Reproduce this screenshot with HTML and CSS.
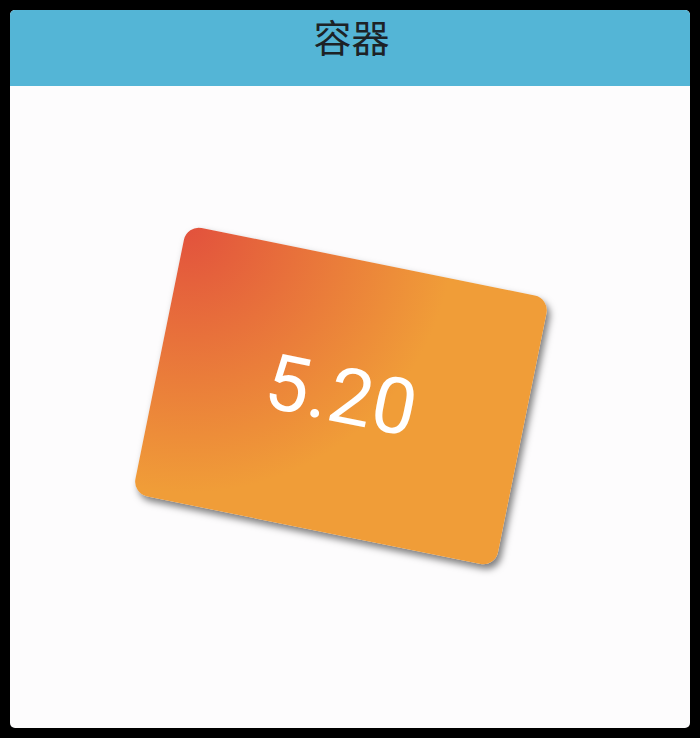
FILE: index.html
```html
<!DOCTYPE html>
<html lang="zh">
<head>
<meta charset="utf-8">
<title>容器</title>
<link rel="stylesheet" href="styles.css">
</head>
<body>
<div class="panel">
  <header class="appbar">
    <h1 class="title">容器</h1>
  </header>
  <main class="content">
    <div class="card">
      <span class="value">5.20</span>
    </div>
  </main>
</div>
</body>
</html>
```
FILE: styles.css
```css
html, body {
  margin: 0;
  padding: 0;
  background: #000;
}
body {
  padding: 10px;
  font-family: Roboto, "Noto Sans CJK SC", sans-serif;
}
.panel {
  width: 680px;
  height: 718px;
  border-radius: 5px;
  background: #fdfcfd;
  display: flex;
  flex-direction: column;
}
.appbar {
  height: 76px;
  flex: none;
  background: #54b5d6;
  border-radius: 5px 5px 0 0;
  display: flex;
  justify-content: center;
  align-items: center;
  padding-bottom: 24px;
  box-sizing: border-box;
}
.title {
  margin: 0;
  font-family: "Noto Sans CJK SC", sans-serif;
  font-weight: 400;
  font-size: 38px;
  line-height: 1.2;
  color: #1d2226;
  padding-left: 3px;
}
.content {
  flex: 1;
  padding: 173px 0 0 146px;
}
.card {
  width: 370px;
  height: 274px;
  border-radius: 15px;
  background: radial-gradient(circle 268px at 0 0, #e2513d 0%, #f09d38 100%);
  box-shadow: 4px 4px 7px rgba(0, 0, 0, 0.5);
  transform: rotate(11.46deg);
  display: flex;
  align-items: center;
  justify-content: center;
}
.value {
  color: #fff;
  font-family: Roboto, sans-serif;
  font-size: 78px;
  font-weight: 400;
  line-height: 1;
}
```
